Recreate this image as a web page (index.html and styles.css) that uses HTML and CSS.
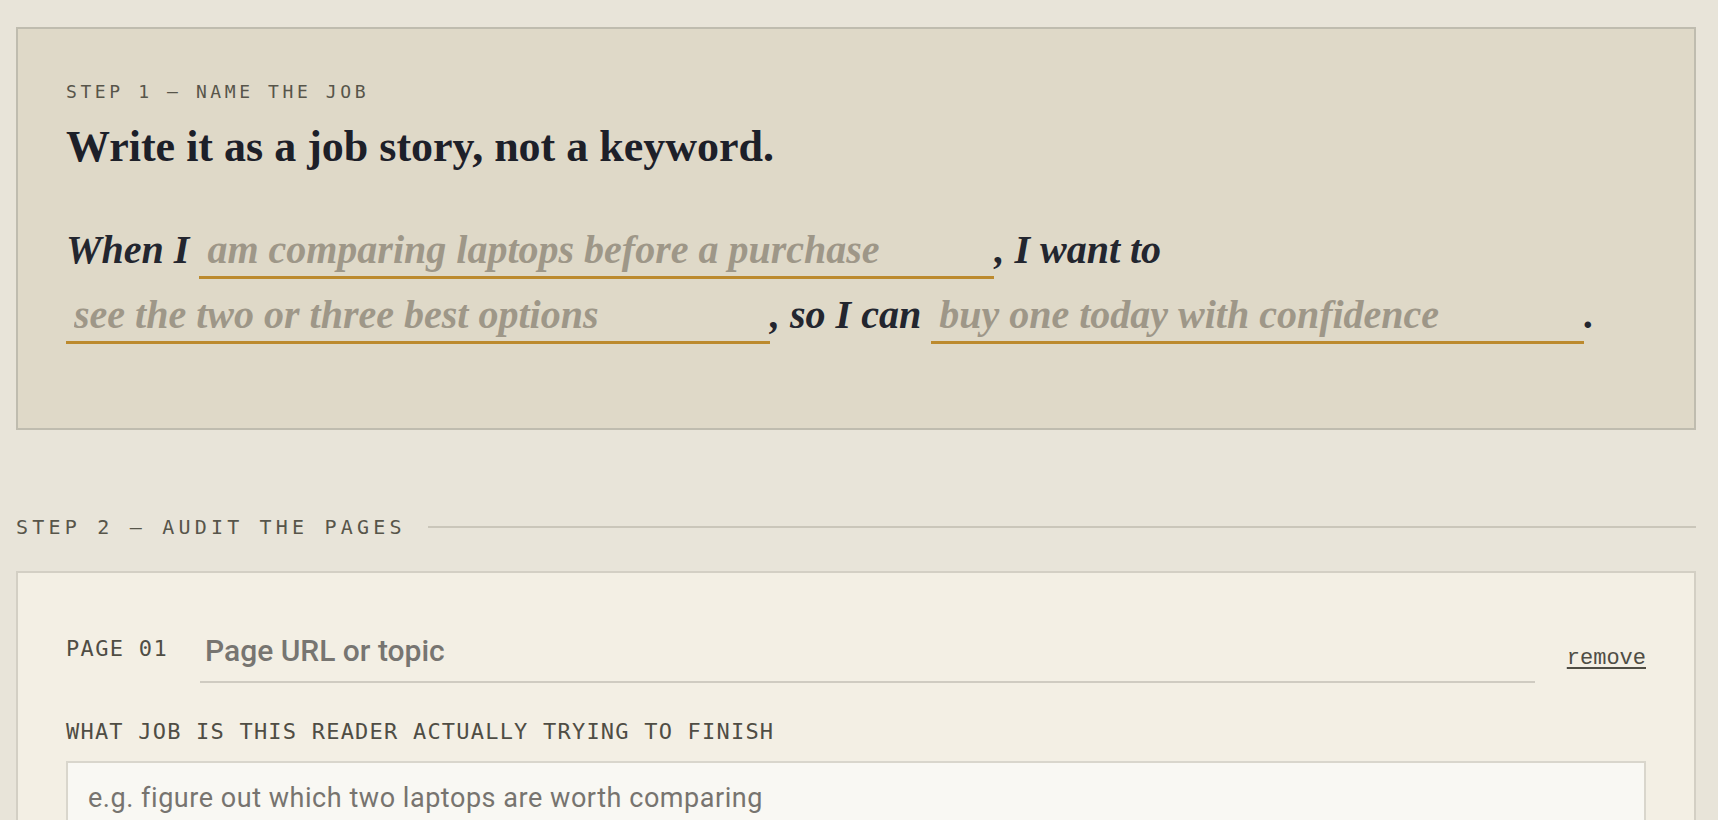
FILE: index.html
```html
<!DOCTYPE html>
<html>
  <head>
    <meta name="viewport" content="width=device-width, initial-scale=1.0">
    <link rel="stylesheet" href="styles.css">
    <title>Job Story Audit</title>
  </head>
  <body>
    <main class="page">

      <!--Step 1: the job story-->
      <section class="card card-job">
        <p class="step">Step 1 — Name the job</p>
        <h2 class="card-title">Write it as a job story, not a keyword.</h2>
        <p class="story">When I <input class="blank blank-when" type="text" placeholder="am comparing laptops before a purchase">, I want to <input class="blank blank-want" type="text" placeholder="see the two or three best options">, so I can <input class="blank blank-so" type="text" placeholder="buy one today with confidence">.</p>
      </section>

      <!--Step 2: page audit-->
      <div class="section-head">
        <span class="step step-lg">Step 2 — Audit the pages</span>
        <span class="rule"></span>
      </div>

      <section class="card card-page">
        <div class="page-row">
          <span class="page-num">Page 01</span>
          <input class="page-url" type="text" placeholder="Page URL or topic">
          <a class="remove" href="#">remove</a>
        </div>
        <label class="field-label" for="job-1">What job is this reader actually trying to finish</label>
        <textarea class="field" id="job-1" placeholder="e.g. figure out which two laptops are worth comparing"></textarea>
      </section>

    </main>
  </body>
</html>
```

FILE: styles.css
```css
body {
  margin: 0;
  background-color: #e8e4d9;
  color: #1d2029;
}

.page {
  width: 1680px;
  margin-left: 16px;
  padding-top: 27px;
}

.card {
  border: 2px solid #bfbcaf;
  padding: 50px 48px 81px;
}

.card-job {
  background-color: #dfd9c8;
}

/* mono step labels */
.step {
  margin: 0;
  font-family: "DejaVu Sans Mono", monospace;
  font-size: 18px;
  line-height: 1.4;
  letter-spacing: 0.2em;
  text-transform: uppercase;
  color: #57554a;
}

.step-lg {
  font-size: 20px;
  letter-spacing: 0.21em;
}

.card-title {
  margin: 19px 0 0;
  font-family: "Liberation Serif", serif;
  font-size: 44px;
  line-height: 48px;
  font-weight: bold;
  color: #1d2029;
}

.story {
  margin: 46px 0 0;
  font-family: "Liberation Serif", serif;
  font-size: 40px;
  line-height: 65px;
  font-style: italic;
  font-weight: bold;
  color: #23262f;
}

.blank {
  font: inherit;
  line-height: 44px;
  color: #23262f;
  background: transparent;
  border: none;
  border-bottom: 3px solid #bc8a2e;
  padding: 0 8px 4px;
  outline: none;
}

.blank::placeholder {
  color: #9e9788;
}

.blank-when {
  width: 779px;
}

.blank-want {
  width: 688px;
}

.blank-so {
  width: 637px;
}

.section-head {
  display: flex;
  align-items: center;
  gap: 22px;
  margin: 83px 0 30px;
}

.rule {
  flex: 1;
  height: 2px;
  background-color: #cac6ba;
}

.card-page {
  background-color: #f3efe4;
  border-color: #d3cfc4;
  padding-bottom: 48px;
}

.page-row {
  display: flex;
  align-items: flex-start;
  gap: 32px;
}

.page-num {
  padding-top: 13px;
  font-family: "DejaVu Sans Mono", monospace;
  font-size: 22px;
  line-height: 26px;
  letter-spacing: 0.06em;
  text-transform: uppercase;
  color: #4f4d44;
}

.page-url {
  flex: 1;
  font-family: Roboto, sans-serif;
  font-size: 30px;
  font-weight: 500;
  color: #1d2029;
  background: transparent;
  border: none;
  border-bottom: 2px solid #cfcbc1;
  padding: 10px 5px 13px;
  outline: none;
}

.page-url::placeholder {
  color: #777571;
}

.remove {
  padding-top: 23px;
  font-family: "Liberation Mono", monospace;
  font-size: 22px;
  line-height: 26px;
  color: #4f4d44;
  text-decoration: underline;
  text-decoration-thickness: 2px;
  text-underline-offset: 3px;
}

.field-label {
  display: block;
  margin-top: 36px;
  font-family: "DejaVu Sans Mono", monospace;
  font-size: 22px;
  line-height: 26px;
  letter-spacing: 0.055em;
  text-transform: uppercase;
  color: #4f4d44;
}

.field {
  display: block;
  box-sizing: border-box;
  width: 100%;
  height: 140px;
  margin-top: 16px;
  padding: 17px 20px;
  font-family: Roboto, sans-serif;
  font-size: 27px;
  line-height: 1.4;
  letter-spacing: 0.02em;
  color: #1d2029;
  background-color: #f9f8f3;
  border: 2px solid #d9d6cc;
  resize: vertical;
  outline: none;
}

.field::placeholder {
  color: #77746f;
}
```
